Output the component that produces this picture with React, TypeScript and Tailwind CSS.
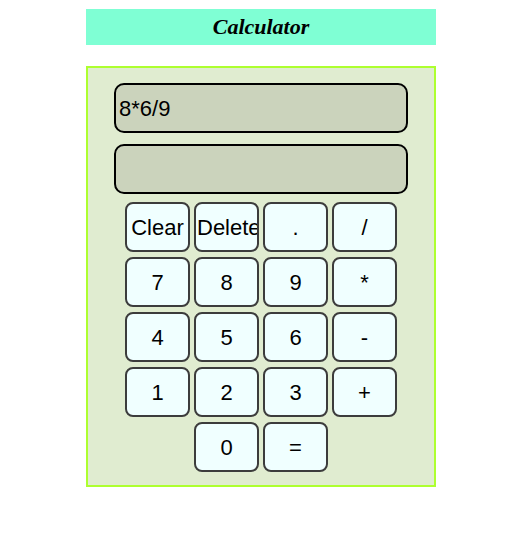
const keys: string[][] = [
  ["Clear", "Delete", ".", "/"],
  ["7", "8", "9", "*"],
  ["4", "5", "6", "-"],
  ["1", "2", "3", "+"],
  ["0", "="],
];

function Key({ label }: { label: string }) {
  return (
    <button className="w-[65px] h-[50px] overflow-hidden whitespace-nowrap px-px text-center border-2 border-[#3c3c3c] rounded-[8px] bg-[#f0ffff] text-[22px] text-black">
      {label}
    </button>
  );
}

export default function App() {
  return (
    <div className="w-[522px] pt-[9px] flex flex-col items-center font-['Liberation_Sans',Arial,sans-serif]">
      <div className="w-[350px] h-[36px] bg-[#7fffd4] flex items-center justify-center">
        <h2 className="font-['Liberation_Serif','Times_New_Roman',serif] text-[22px] font-bold italic text-black leading-none">
          Calculator
        </h2>
      </div>

      <div className="mt-[21px] w-[350px] border-2 border-[#adff2f] bg-[#e0ecd0] px-[26px] pt-[15px] pb-[13px]">
        <div className="h-[50px] border-2 border-black rounded-[10px] bg-[#cbd3bc] flex items-center px-[3px] text-[22px] text-black">
          8*6/9
        </div>
        <div className="mt-[11px] h-[50px] border-2 border-black rounded-[10px] bg-[#cbd3bc]" />

        <div className="mt-[8px] flex flex-col items-center gap-[5px]">
          {keys.map((row, i) => (
            <div key={i} className="flex gap-[4px]">
              {row.map((k) => (
                <Key key={k} label={k} />
              ))}
            </div>
          ))}
        </div>
      </div>
    </div>
  );
}
